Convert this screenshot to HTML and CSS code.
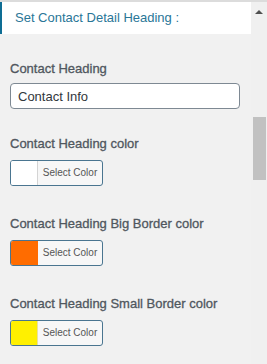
FILE: index.html
```html
<!DOCTYPE html>
<html lang="en">
<head>
  <meta charset="UTF-8" />
  <meta name="viewport" content="width=device-width, initial-scale=1" />
  <title>Contact Detail Heading</title>
  <link rel="stylesheet" href="styles.css">
</head>
<body>
  <div class="panel">
    <div class="section-title">Set Contact Detail Heading :</div>

    <div class="control first">
      <label class="control-title">Contact Heading</label>
      <input class="text-input" type="text" value="Contact Info" />
    </div>

    <div class="control second">
      <span class="control-title">Contact Heading color</span>
      <button class="color-btn"><span class="swatch swatch-white"></span><span class="color-label">Select Color</span></button>
    </div>

    <div class="control">
      <span class="control-title">Contact Heading Big Border color</span>
      <button class="color-btn"><span class="swatch swatch-orange"></span><span class="color-label">Select Color</span></button>
    </div>

    <div class="control">
      <span class="control-title">Contact Heading Small Border color</span>
      <button class="color-btn"><span class="swatch swatch-yellow"></span><span class="color-label">Select Color</span></button>
    </div>
  </div>

  <div class="scrollbar">
    <span class="arrow-up"></span>
    <span class="thumb"></span>
  </div>
</body>
</html>
```

FILE: styles.css
```css
html, body {
  margin: 0; padding: 0;
  height: 100%;
  overflow: hidden;
}
* { box-sizing: border-box; }

body {
  display: flex;
  background: #f1f1f1;
  border-top: 2px solid #dcdcdc;
  font-family: "Liberation Sans", Arial, sans-serif;
  color: #50575e;
}

.panel {
  flex: 1;
}

.section-title {
  height: 32px;
  background: #fff;
  border-left: 2px solid #0e6d94;
  padding: 6px 0 0 13px;
  font-size: 13px;
  line-height: 20px;
  color: #2a7697;
}

.control {
  padding: 0 11px 0 10px;
  margin-top: 28px;
}
.control.first,
.control.second { margin-top: 25px; }

.control-title {
  display: block;
  font-size: 13px;
  line-height: 20px;
  margin-bottom: 6px;
  color: #50575e;
  -webkit-text-stroke: 0.3px #50575e;
}
.control.first .control-title { margin-bottom: 4px; }

.text-input {
  display: block;
  width: 100%;
  height: 26px;
  margin: 0;
  padding: 0 7px;
  border: 1px solid #7e8993;
  border-radius: 4px;
  background: #fff;
  font-family: inherit;
  font-size: 13px;
  color: #32373c;
}

.color-btn {
  display: flex;
  width: 93px;
  height: 26px;
  margin: 0;
  padding: 0;
  border: 1px solid #4a7590;
  border-radius: 3px;
  background: #f7f7f7;
  overflow: hidden;
  font-family: inherit;
}

.swatch {
  width: 27px;
  height: 100%;
  border-right: 1px solid #d4d4d4;
}
.swatch-white { background: #fff; }
.swatch-orange { background: #ff6c00; border-right-color: #ff6c00; }
.swatch-yellow { background: #fff000; border-right-color: #e8e0a0; }

.color-label {
  flex: 1;
  font-size: 10px;
  line-height: 24px;
  color: #555;
  text-align: center;
}

.scrollbar {
  width: 16px;
  display: flex;
  flex-direction: column;
  align-items: center;
  background: #f0f0f0;
}

.arrow-up {
  margin-top: 8px;
  width: 0; height: 0;
  border-left: 4px solid transparent;
  border-right: 4px solid transparent;
  border-bottom: 4px solid #505050;
}

.thumb {
  margin-top: 103px;
  width: 13px;
  height: 63px;
  background: #c1c1c1;
}
```
